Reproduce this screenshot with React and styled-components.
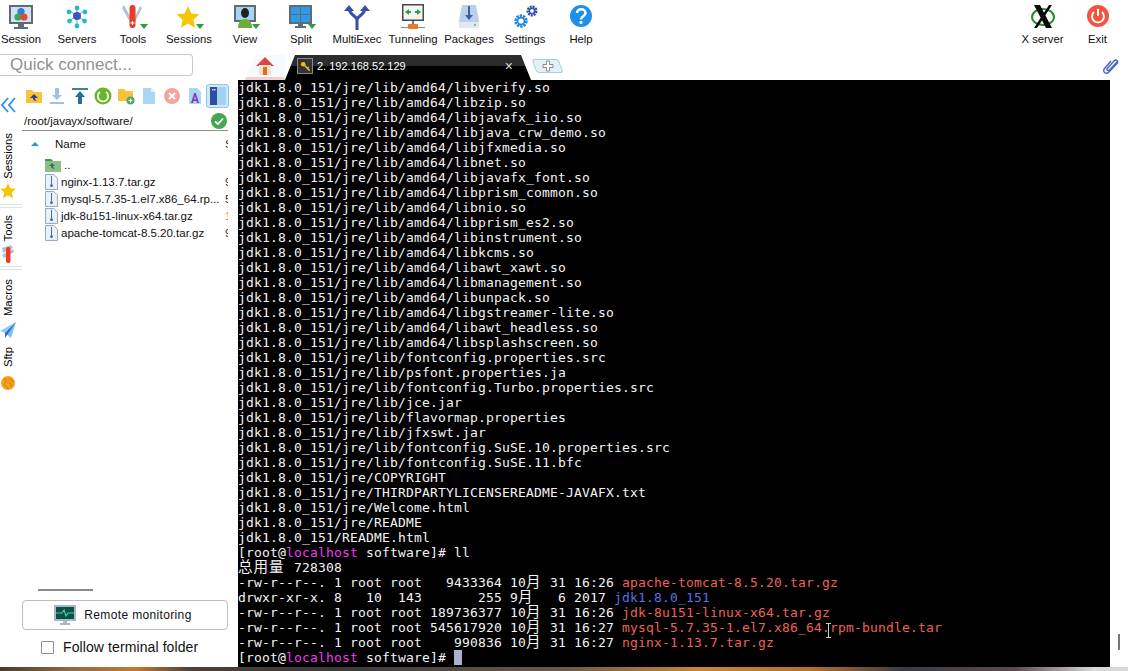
import React from "react";
import styled, { createGlobalStyle } from "styled-components";

const GlobalStyle = createGlobalStyle`
  html, body {
    margin: 0;
    background: #fff;
  }
`;

const Page = styled.div`
  display: flex;
  flex-direction: column;
  width: 1128px;
  height: 671px;
  overflow: hidden;
  background: #fff;
  color: #111;
  font-family: "Liberation Sans", Arial, sans-serif;
`;

const Toolbar = styled.div`
  display: flex;
  justify-content: space-between;
  flex: 0 0 52px;
  margin-left: -7px;
  padding-right: 3px;
`;

const ToolGroup = styled.div`
  display: flex;
`;

const ToolButton = styled.div`
  display: flex;
  flex-direction: column;
  align-items: center;
  width: ${(p) => p.$width || 56}px;
  padding-top: 2px;
  font-size: 11.3px;
  white-space: nowrap;

  svg {
    display: block;
    height: 30px;
    margin-bottom: 1px;
  }
`;

const Body = styled.div`
  display: flex;
  flex: 1;
  min-height: 0;
`;

const LeftColumn = styled.div`
  display: flex;
  flex-direction: column;
  flex: 0 0 238px;
`;

const QuickConnect = styled.div`
  flex: 0 0 20px;
  width: 182px;
  margin-top: 2px;
  padding-left: 10px;
  border: 1px solid #c9c9c9;
  border-left: none;
  border-radius: 0 4px 4px 0;
  color: #929292;
  font-size: 17px;
  line-height: 20px;
`;

const SideArea = styled.div`
  display: flex;
  flex: 1;
  min-height: 0;
`;

const Rail = styled.div`
  display: flex;
  flex-direction: column;
  align-items: center;
  flex: 0 0 22px;
  width: 22px;
  padding: 21px 6px 0 0;
  box-sizing: border-box;

  svg {
    display: block;
    flex: none;
  }
`;

const RailLabel = styled.div`
  margin-top: ${(p) => p.$top}px;
  margin-bottom: ${(p) => p.$bottom}px;
  writing-mode: vertical-rl;
  transform: rotate(180deg);
  font-size: 11.3px;
  line-height: 14px;
  color: #000;
`;

const RailDivider = styled.div`
  flex: none;
  width: 22px;
  margin: ${(p) => p.$top}px -6px 0 0;
  height: 2px;
  border-top: 1px solid #d3e6ee;
  border-bottom: 1px solid #d3e6ee;
`;

const Panel = styled.div`
  display: flex;
  flex-direction: column;
  flex: 0 0 206px;
  width: 206px;
  padding-bottom: 13px;
  box-sizing: border-box;
`;

const PanelTools = styled.div`
  display: flex;
  flex: 0 0 24px;
  margin-top: 8px;
`;

const PanelTool = styled.div`
  display: flex;
  align-items: center;
  justify-content: center;
  flex: 0 0 23px;
  width: 23px;
  height: 24px;
  box-sizing: border-box;
  border-radius: 3px;
  border: 1px solid ${(p) => (p.$active ? "#8cc6ea" : "transparent")};
  background: ${(p) => (p.$active ? "#cfe7f7" : "transparent")};
`;

const PathRow = styled.div`
  display: flex;
  align-items: center;
  justify-content: space-between;
  flex: 0 0 18px;
  margin-top: 4px;
  padding: 0 1px 0 2px;
  border-bottom: 1px solid #8f8f8f;
  font-size: 11.5px;
`;

const HeaderRow = styled.div`
  display: flex;
  align-items: center;
  flex: 0 0 25px;
  padding-left: 9px;
  font-size: 11.5px;
  overflow: hidden;
`;

const SortArrow = styled.span`
  width: 0;
  height: 0;
  margin-right: 16px;
  border-left: 4px solid transparent;
  border-right: 4px solid transparent;
  border-bottom: 4px solid #2f8fe6;
`;

const HeaderName = styled.span`
  flex: 1;
`;

const FileRow = styled.div`
  display: flex;
  align-items: center;
  height: 17px;
  padding-left: 23px;
  font-size: 11.5px;
  white-space: nowrap;

  svg {
    flex: none;
    margin-right: 3px;
  }
`;

const FileName = styled.span`
  flex: 1;
  min-width: 0;
`;

const FileSize = styled.span`
  flex: 0 0 3px;
  width: 3px;
  overflow: hidden;
  color: ${(p) => p.$tint || "#333"};
`;

const PanelFooter = styled.div`
  display: flex;
  flex-direction: column;
  margin-top: auto;
`;

const ShortRule = styled.div`
  width: 55px;
  height: 2px;
  margin-left: 16px;
  background: #8a8a8a;
`;

const MonitorButton = styled.div`
  display: flex;
  align-items: center;
  justify-content: center;
  gap: 8px;
  height: 28px;
  margin-top: 9px;
  padding-right: 4px;
  border: 1px solid #bdbdbd;
  border-radius: 4px;
  font-size: 12px;
  letter-spacing: 0.35px;
`;

const FollowRow = styled.label`
  display: flex;
  align-items: center;
  gap: 9px;
  height: 14px;
  margin-top: 10px;
  padding-left: 19px;
  font-size: 14px;
  letter-spacing: 0.1px;
`;

const CheckBox = styled.span`
  flex: none;
  width: 11px;
  height: 11px;
  border: 1px solid #8e8e8e;
  border-radius: 1px;
`;

const Workspace = styled.div`
  display: flex;
  flex-direction: column;
  flex: 1;
  min-width: 0;
`;

const TabBar = styled.div`
  display: flex;
  align-items: flex-end;
  flex: 0 0 28px;
  padding-left: 7px;
`;

const HomeTab = styled.div`
  display: flex;
  align-items: center;
  justify-content: center;
  width: 40px;
  height: 25px;
  box-sizing: border-box;
  border-bottom: 3px solid #f0d0d0;
  clip-path: polygon(10px 0, 100% 0, 100% 100%, 0 100%);
  background: #f6fafc;
`;

const ActiveTab = styled.div`
  display: flex;
  align-items: center;
  width: 246px;
  height: 25px;
  padding: 0 18px 3px 12px;
  box-sizing: border-box;
  clip-path: polygon(10px 0, calc(100% - 10px) 0, 100% 100%, 0 100%);
  background: linear-gradient(#2c2c2c 0, #2c2c2c 44%, #000 44%);
  color: #fff;
  font-size: 11px;
`;

const KeyBox = styled.span`
  display: flex;
  align-items: center;
  justify-content: center;
  width: 14px;
  height: 14px;
  margin-right: 4px;
  border: 1px solid #888;
  background: #333;
`;

const TabTitle = styled.span`
  flex: 1;
`;

const TabClose = styled.span`
  color: #ddd;
  font-size: 14px;
`;

const NewTab = styled.div`
  display: flex;
  align-items: center;
  justify-content: center;
  width: 27px;
  height: 14px;
  margin: 0 0 7px 3px;
  border: 1px solid #a6d0e2;
  border-radius: 3px;
  background: #e4f2f8;
  transform: skewX(20deg);
  box-sizing: border-box;

  svg {
    transform: skewX(-20deg);
  }
`;

const ClipSlot = styled.div`
  margin: 0 8px 5px auto;

  svg {
    display: block;
  }
`;

const TermArea = styled.div`
  display: flex;
  flex: 1;
  min-height: 0;
`;

const Terminal = styled.pre`
  position: relative;
  flex: 1;
  margin: 0;
  padding: 0;
  overflow: hidden;
  background: #000;
  color: #f4f4f4;
  font-family: "DejaVu Sans Mono", "Noto Sans CJK SC", monospace;
  font-size: 13px;
  letter-spacing: 0.174px;
  line-height: 15px;
`;

const TermLine = styled.div`
  height: 15px;
  white-space: pre;
`;

const Wide = styled.span`
  display: inline-block;
  width: ${(p) => p.$cells * 8}px;
  font-size: 14.5px;
  letter-spacing: 1px;
  line-height: 15px;
  vertical-align: top;
`;

const Host = styled.span`
  color: #f03cf0;
`;

const Archive = styled.span`
  color: #ee6358;
`;

const Directory = styled.span`
  color: #5d6fe6;
`;

const Cursor = styled.span`
  display: inline-block;
  width: 8px;
  height: 15px;
  vertical-align: top;
  background: #a9b2cf;
`;

const IBeam = styled.span`
  position: absolute;
  left: 588px;
  top: 543px;
  width: 5px;
  height: 13px;
  border-top: 1px solid #ccc;
  border-bottom: 1px solid #ccc;

  &::after {
    content: "";
    position: absolute;
    left: 2px;
    top: 0;
    bottom: 0;
    width: 1px;
    background: #ccc;
  }
`;

const Gutter = styled.div`
  display: flex;
  align-items: flex-end;
  justify-content: center;
  flex: 0 0 18px;
  padding-bottom: 17px;
  box-sizing: border-box;
`;

const GutterThumb = styled.div`
  width: 2px;
  height: 16px;
  background: #777;
`;

const DesktopStrip = styled.div`
  flex: 0 0 4px;
  background: linear-gradient(
    90deg,
    #4a3a2c 0,
    #8a6a45 6%,
    #c07a30 12%,
    #4c4038 17%,
    #3a3a3a 30%,
    #6a5a4a 50%,
    #c9862f 62%,
    #b86f28 72%,
    #3a3a42 80%,
    #5a4a50 90%,
    #d9d9d9 97%
  );
`;

const Drop = () => <path d="M23 22h8l-4 5z" fill="#2e9e3c" />;

const SessionIcon = () => (
  <svg viewBox="0 0 32 30" width="32">
    <rect x="4" y="3" width="24" height="19" fill="#5f6b78" />
    <rect x="6" y="5" width="20" height="15" fill="#cfe2f3" />
    <circle cx="16" cy="9.5" r="3.6" fill="#2a7de1" />
    <circle cx="13" cy="15" r="3.6" fill="#3aa655" />
    <circle cx="19" cy="15" r="3.6" fill="#e2483d" />
    <path d="M13 22h6v3h4v2H9v-2h4z" fill="#5f6b78" />
  </svg>
);

const ServersIcon = () => (
  <svg viewBox="0 0 32 30" width="32">
    <path d="M16 14 9 9M16 14l7-5M16 14l-8 5M16 14l8 5M16 14V6M16 14v9" stroke="#4aa8c8" strokeWidth="1" />
    <circle cx="16" cy="14" r="4" fill="#3a56c5" />
    <circle cx="16" cy="6" r="2.4" fill="#2fb7c7" />
    <circle cx="8" cy="10" r="2.4" fill="#2fb7c7" />
    <circle cx="24" cy="10" r="2.4" fill="#2fb7c7" />
    <circle cx="8.5" cy="19" r="2.4" fill="#2fb7c7" />
    <circle cx="23.5" cy="19" r="2.4" fill="#2fb7c7" />
    <circle cx="16" cy="24" r="2.4" fill="#2fb7c7" />
  </svg>
);

const ToolsIcon = () => (
  <svg viewBox="0 0 32 30" width="32">
    <path d="M7 3l8 15-2 2L5 6z" fill="#b6bfd6" />
    <path d="M25 6l-7 14-2-1 7-15z" fill="#b6bfd6" />
    <rect x="12.5" y="3" width="6" height="23" rx="3" fill="#ec3b24" />
    <path d="M15.5 19v4M13.5 21h4" stroke="#fff" strokeWidth="1.2" />
    <Drop />
  </svg>
);

const StarIcon = () => (
  <svg viewBox="0 0 32 30" width="32">
    <path d="M15 4l3.4 7.4 8 .9-6 5.4 1.7 8-7.1-4.1-7.1 4.1 1.7-8-6-5.4 8-.9z" fill="#f6c409" />
    <Drop />
  </svg>
);

const ViewIcon = () => (
  <svg viewBox="0 0 32 30" width="32">
    <rect x="5" y="3" width="22" height="17" fill="#5f6b78" />
    <rect x="7" y="5" width="18" height="13" fill="#a8d4ee" />
    <ellipse cx="16" cy="11" rx="4" ry="5" fill="#222" />
    <path d="M9 26c0-6 3-9 7-9s7 3 7 9z" fill="#6cae3a" />
    <Drop />
  </svg>
);

const SplitIcon = () => (
  <svg viewBox="0 0 32 30" width="32">
    <rect x="4" y="3" width="23" height="19" fill="#5f6b78" />
    <rect x="6" y="5" width="9" height="7" fill="#2f9be6" />
    <rect x="16" y="5" width="9" height="7" fill="#2f9be6" />
    <rect x="6" y="13" width="9" height="7" fill="#2f9be6" />
    <rect x="16" y="13" width="9" height="7" fill="#2f9be6" />
    <path d="M13 22h5v2h3v2H10v-2h3z" fill="#5f6b78" />
    <Drop />
  </svg>
);

const MultiExecIcon = () => (
  <svg viewBox="0 0 32 30" width="32">
    <path d="M16 28V18C16 14 8 13 8 6M16 18c0-4 8-5 8-12" fill="none" stroke="#3550a8" strokeWidth="3" />
    <path d="M3 9l5-6 5 6zM19 9l5-6 5 6z" fill="#3550a8" />
  </svg>
);

const TunnelIcon = () => (
  <svg viewBox="0 0 32 30" width="32">
    <rect x="5" y="2" width="22" height="17" fill="#4a4a4a" />
    <rect x="6.5" y="3.5" width="19" height="14" fill="#f4f4f4" />
    <path d="M8 10l4-3v2h2v2h-2v2zM24 10l-4-3v2h-2v2h2v2z" fill="#25a244" />
    <rect x="15" y="19" width="2" height="4" fill="#777" />
    <rect x="4" y="25" width="24" height="1" fill="#8a8a8a" />
    <rect x="11" y="22" width="10" height="5" rx="1" fill="#ec7a23" />
  </svg>
);

const PackagesIcon = () => (
  <svg viewBox="0 0 32 30" width="32">
    <path d="M9 3h14l3 16v7H6v-7z" fill="#bcd0e6" />
    <rect x="6" y="20" width="20" height="6" fill="#dfe9f4" />
    <circle cx="22" cy="23" r="1" fill="#4cb050" />
    <path d="M15 4h2v9h3l-4 5-4-5h3z" fill="#3b5fa8" />
  </svg>
);

const SettingsIcon = () => (
  <svg viewBox="0 0 32 30" width="32">
    <circle cx="12" cy="19" r="5" fill="none" stroke="#1f86e0" strokeWidth="3.4" strokeDasharray="2.2 0.9" />
    <circle cx="12" cy="19" r="3.4" fill="none" stroke="#1f86e0" strokeWidth="1.6" />
    <circle cx="23" cy="9" r="4" fill="none" stroke="#2e4fae" strokeWidth="3" strokeDasharray="1.9 0.8" />
    <circle cx="23" cy="9" r="2.6" fill="none" stroke="#2e4fae" strokeWidth="1.4" />
  </svg>
);

const HelpIcon = () => (
  <svg viewBox="0 0 32 30" width="32">
    <circle cx="16" cy="14" r="11" fill="#1e90ea" />
    <path d="M12 11c0-5 8.500-5 8.500 0 0 3.500-4.500 3-4.500 6.500" fill="none" stroke="#fff" strokeWidth="2.6" />
    <rect x="14.600" y="19" width="2.800" height="2.800" fill="#fff" />
  </svg>
);

const XServerIcon = () => (
  <svg viewBox="0 0 32 30" width="32">
    <ellipse cx="16" cy="15" rx="11" ry="8" fill="none" stroke="#1f9128" strokeWidth="2" />
    <path d="M7 3h6l12 23h-6zM22 3h3L10 26H7z" fill="#0b0b0b" />
  </svg>
);

const ExitIcon = () => (
  <svg viewBox="0 0 32 30" width="32">
    <circle cx="16" cy="14" r="11" fill="#f4533f" />
    <path d="M12 10a6 6 0 1 0 8 0" fill="none" stroke="#fff" strokeWidth="2" />
    <path d="M16 7v7" stroke="#fff" strokeWidth="2" />
  </svg>
);

const HomeIcon = () => (
  <svg viewBox="0 0 20 20" width="20" height="20">
    <path d="M10 1 1 10h3v9h12v-9h3z" fill="#d9473f" />
    <rect x="4" y="9" width="12" height="10" fill="#efe3d0" />
    <rect x="8" y="11" width="4" height="8" fill="#e8691e" />
  </svg>
);

const KeyIcon = () => (
  <svg viewBox="0 0 12 12" width="11" height="11">
    <circle cx="3.500" cy="3.500" r="2.500" fill="#f2b81c" />
    <path d="M5 5l5.500 5.500M8 8l1.500-1.500" stroke="#f2b81c" strokeWidth="1.600" />
  </svg>
);

const PlusIcon = () => (
  <svg viewBox="0 0 12 12" width="12" height="12">
    <path d="M4.500 1h3v3.500H11v3H7.500V11h-3V7.500H1v-3h3.500z" fill="#fff" stroke="#8a8a8a" />
  </svg>
);

const ClipIcon = () => (
  <svg viewBox="0 0 18 18" width="18" height="18">
    <path
      d="M15 5 7.500 13c-1.500 1.600-3.500 0-2.200-1.600L12 4c2-2.200 5 .2 3 2.500l-8 8.500c-3 3-7-.5-4.500-3.500L9 4"
      fill="none"
      stroke="#4a68c0"
      strokeWidth="1.500"
    />
  </svg>
);

const ChevronsIcon = () => (
  <svg viewBox="0 0 15 16" width="15" height="16">
    <path d="M7 1 1 8l6 7M14 1 8 8l6 7" fill="none" stroke="#2f8fe6" strokeWidth="1.800" />
  </svg>
);

const RailStar = () => (
  <svg viewBox="0 0 16 16" width="16" height="16">
    <path d="M8 0l2.300 5.200 5.700.6-4.300 3.800 1.300 5.600L8 12.300 3 15.200l1.300-5.600L0 5.800l5.700-.6z" fill="#f6c409" />
  </svg>
);

const RailKnife = () => (
  <svg viewBox="0 0 16 20" width="16" height="20">
    <path d="M2 4l9-3 2 3-10 5zM2 11l11-6 1 3-10 6z" fill="#b6bfd6" />
    <rect x="6" y="3" width="4.500" height="16" rx="2" fill="#ec3b24" />
  </svg>
);

const RailPlane = () => (
  <svg viewBox="0 0 16 17" width="16" height="17">
    <path d="M16 0 0 9l5 2z" fill="#8ccbf5" />
    <path d="M16 0 5 11l6 5z" fill="#7cc0f0" />
    <path d="M16 0 5 11l0 5 2-3z" fill="#2d66b8" />
  </svg>
);

const RailGlobe = () => (
  <svg viewBox="0 0 14 14" width="14" height="14">
    <circle cx="7" cy="7" r="7" fill="#f4a01c" />
    <path d="M3 3c3 0 3 3 1 4s1 4 3 5M9 2c-1 2 3 3 4 4M8 7c2 0 3 2 2 4" fill="none" stroke="#d9701a" strokeWidth="1" />
  </svg>
);

const FolderUp = ({ body = "#f8c23a", arrow = "#2c3e9c" }) => (
  <svg viewBox="0 0 18 18" width="18" height="18">
    <path d="M1 3h6l2 2h8v11H1z" fill={body} />
    <path d="M9 7 5 11h3c0 2 1 3 4 3-1.500-1-2-2-2-3h3z" fill={arrow} />
  </svg>
);

const DownloadTool = () => (
  <svg viewBox="0 0 18 18" width="18" height="18">
    <path d="M7 1h4v7h3l-5 5-5-5h3z" fill="#9cc0e6" />
    <rect x="2" y="15" width="14" height="2" fill="#9cc0e6" />
  </svg>
);

const UploadTool = () => (
  <svg viewBox="0 0 18 18" width="18" height="18">
    <rect x="1" y="1" width="16" height="2" fill="#2f8c96" />
    <path d="M9 4l5 6h-3v7H7v-7H4z" fill="#24718f" />
  </svg>
);

const RefreshTool = () => (
  <svg viewBox="0 0 18 18" width="18" height="18">
    <circle cx="9" cy="9" r="8.500" fill="#6cb42c" />
    <path d="M6 5a5.200 5.200 0 1 0 6 0" fill="none" stroke="#fff" strokeWidth="1.600" />
  </svg>
);

const NewFolderTool = () => (
  <svg viewBox="0 0 18 18" width="18" height="18">
    <path d="M1 2h6l2 2h7v10H1z" fill="#f8c23a" />
    <circle cx="13.500" cy="13.500" r="4" fill="#4ea866" />
    <path d="M13.500 11.500v4M11.500 13.500h4" stroke="#fff" strokeWidth="1.200" />
  </svg>
);

const NewFileTool = () => (
  <svg viewBox="0 0 18 18" width="18" height="18">
    <path d="M3 1h8l4 4v12H3z" fill="#a9d6f5" />
    <path d="M11 1v4h4z" fill="#dff0fb" />
  </svg>
);

const DeleteTool = () => (
  <svg viewBox="0 0 18 18" width="18" height="18">
    <circle cx="9" cy="9" r="8" fill="#f2a59a" />
    <path d="M6 6l6 6M12 6l-6 6" stroke="#fff" strokeWidth="2" />
  </svg>
);

const RenameTool = () => (
  <svg viewBox="0 0 18 18" width="18" height="18">
    <path d="M3 1h8l4 4v12H3z" fill="#a9d6f5" />
    <path d="M5 16 8.200 6h1.600L13 16h-2l-.6-2H7.600L7 16zM8 12.500h2L9 9z" fill="#8b3bb0" />
  </svg>
);

const PanelToggleTool = () => (
  <svg viewBox="0 0 18 20" width="18" height="20">
    <rect x="1" y="1" width="7" height="18" fill="#2a4ea0" />
    <rect x="8" y="1" width="9" height="18" fill="#a4d2f2" />
    <rect x="3" y="3" width="1.500" height="1.500" fill="#cfe0f5" />
    <rect x="5" y="3" width="1.500" height="1.500" fill="#cfe0f5" />
  </svg>
);

const CheckOk = () => (
  <svg viewBox="0 0 16 16" width="16" height="16">
    <circle cx="8" cy="8" r="8" fill="#45a550" />
    <path d="M4 8.500 7 11l5-5.500" fill="none" stroke="#fff" strokeWidth="1.800" />
  </svg>
);

const UpFolderIcon = () => (
  <svg viewBox="0 0 16 16" width="16" height="16">
    <path d="M0 2h6l2 2h8v11H0z" fill="#8cc08a" />
    <path d="M0 2h6l2 2H0z" fill="#3f9a4a" />
    <path d="M7 6 4 9h2c0 2 1 3 4 3-1-.7-2-1.500-2-3h2z" fill="#3a6a5a" />
  </svg>
);

const ArchiveIcon = () => (
  <svg viewBox="0 0 14 17" width="13" height="16">
    <path d="M.5.500h9l4 4v12H.5z" fill="#e8f2fa" stroke="#8aa0b8" />
    <path d="M7 2v9" stroke="#3c62b0" strokeWidth="1" />
    <circle cx="7" cy="12.500" r="1.500" fill="#3c62b0" />
  </svg>
);

const ActivityIcon = () => (
  <svg viewBox="0 0 22 21" width="22" height="21">
    <rect x="0" y="0" width="22" height="16" fill="#a9b7c6" />
    <rect x="2" y="2" width="18" height="12" fill="#0e4f47" />
    <path d="M2 8h6l2-3 2 6 2-3h6" fill="none" stroke="#35d6a8" strokeWidth="1.200" />
    <path d="M9 16h4v2h3v2H6v-2h3z" fill="#a9b7c6" />
  </svg>
);

const leftTools = [
  ["Session", SessionIcon],
  ["Servers", ServersIcon],
  ["Tools", ToolsIcon],
  ["Sessions", StarIcon],
  ["View", ViewIcon],
  ["Split", SplitIcon],
  ["MultiExec", MultiExecIcon],
  ["Tunneling", TunnelIcon],
  ["Packages", PackagesIcon],
  ["Settings", SettingsIcon],
  ["Help", HelpIcon],
];

const panelTools = [
  <FolderUp key="up" />,
  <DownloadTool key="down" />,
  <UploadTool key="upload" />,
  <RefreshTool key="refresh" />,
  <NewFolderTool key="folder" />,
  <NewFileTool key="file" />,
  <DeleteTool key="delete" />,
  <RenameTool key="rename" />,
];

const files = [
  ["nginx-1.13.7.tar.gz", "9"],
  ["mysql-5.7.35-1.el7.x86_64.rp...", "5"],
  ["jdk-8u151-linux-x64.tar.gz", "1", "#d08a20"],
  ["apache-tomcat-8.5.20.tar.gz", "9"],
];

const jre = "jdk1.8.0_151/jre/";
const amd = jre + "lib/amd64/";
const output = [
  ...[
    "libverify.so",
    "libzip.so",
    "libjavafx_iio.so",
    "libjava_crw_demo.so",
    "libjfxmedia.so",
    "libnet.so",
    "libjavafx_font.so",
    "libprism_common.so",
    "libnio.so",
    "libprism_es2.so",
    "libinstrument.so",
    "libkcms.so",
    "libawt_xawt.so",
    "libmanagement.so",
    "libunpack.so",
    "libgstreamer-lite.so",
    "libawt_headless.so",
    "libsplashscreen.so",
  ].map((name) => amd + name),
  ...[
    "fontconfig.properties.src",
    "psfont.properties.ja",
    "fontconfig.Turbo.properties.src",
    "jce.jar",
    "flavormap.properties",
    "jfxswt.jar",
    "fontconfig.SuSE.10.properties.src",
    "fontconfig.SuSE.11.bfc",
  ].map((name) => jre + "lib/" + name),
  jre + "COPYRIGHT",
  jre + "THIRDPARTYLICENSEREADME-JAVAFX.txt",
  jre + "Welcome.html",
  jre + "README",
  "jdk1.8.0_151/README.html",
];

const listing = [
  ["-rw-r--r--. 1 root root   9433364 ", "10", " 31 16:26 ", "apache-tomcat-8.5.20.tar.gz"],
  ["drwxr-xr-x. 8   10  143       255 ", "9", "   6 2017 ", "jdk1.8.0_151", true],
  ["-rw-r--r--. 1 root root 189736377 ", "10", " 31 16:26 ", "jdk-8u151-linux-x64.tar.gz"],
  ["-rw-r--r--. 1 root root 545617920 ", "10", " 31 16:27 ", "mysql-5.7.35-1.el7.x86_64.rpm-bundle.tar"],
  ["-rw-r--r--. 1 root root    990836 ", "10", " 31 16:27 ", "nginx-1.13.7.tar.gz"],
];

const Prompt = () => (
  <>
    [root@<Host>localhost</Host> software]#{" "}
  </>
);

export default function App() {
  return (
    <Page>
      <GlobalStyle />
      <Toolbar>
        <ToolGroup>
          {leftTools.map(([label, Icon]) => (
            <ToolButton key={label}>
              <Icon />
              {label}
            </ToolButton>
          ))}
        </ToolGroup>
        <ToolGroup>
          <ToolButton $width={55}>
            <XServerIcon />X server
          </ToolButton>
          <ToolButton $width={55}>
            <ExitIcon />
            Exit
          </ToolButton>
        </ToolGroup>
      </Toolbar>
      <Body>
        <LeftColumn>
          <QuickConnect>Quick connect...</QuickConnect>
          <SideArea>
            <Rail>
              <ChevronsIcon />
              <RailLabel $top={20} $bottom={4}>Sessions</RailLabel>
              <RailStar />
              <RailDivider $top={5} />
              <RailLabel $top={7} $bottom={3}>Tools</RailLabel>
              <RailKnife />
              <RailDivider $top={2} />
              <RailLabel $top={9} $bottom={6}>Macros</RailLabel>
              <RailPlane />
              <RailLabel $top={8} $bottom={9}>Sftp</RailLabel>
              <RailGlobe />
            </Rail>
            <Panel>
              <PanelTools>
                {panelTools.map((tool) => (
                  <PanelTool key={tool.key}>{tool}</PanelTool>
                ))}
                <PanelTool $active>
                  <PanelToggleTool />
                </PanelTool>
              </PanelTools>
              <PathRow>
                /root/javayx/software/
                <CheckOk />
              </PathRow>
              <HeaderRow>
                <SortArrow />
                <HeaderName>Name</HeaderName>
                <FileSize>S</FileSize>
              </HeaderRow>
              <FileRow>
                <UpFolderIcon />
                <FileName>..</FileName>
              </FileRow>
              {files.map(([name, size, tint]) => (
                <FileRow key={name}>
                  <ArchiveIcon />
                  <FileName>{name}</FileName>
                  <FileSize $tint={tint}>{size}</FileSize>
                </FileRow>
              ))}
              <PanelFooter>
                <ShortRule />
                <MonitorButton>
                  <ActivityIcon />
                  Remote monitoring
                </MonitorButton>
                <FollowRow>
                  <CheckBox />
                  Follow terminal folder
                </FollowRow>
              </PanelFooter>
            </Panel>
          </SideArea>
        </LeftColumn>
        <Workspace>
          <TabBar>
            <HomeTab>
              <HomeIcon />
            </HomeTab>
            <ActiveTab>
              <KeyBox>
                <KeyIcon />
              </KeyBox>
              <TabTitle>2. 192.168.52.129</TabTitle>
              <TabClose>×</TabClose>
            </ActiveTab>
            <NewTab>
              <PlusIcon />
            </NewTab>
            <ClipSlot>
              <ClipIcon />
            </ClipSlot>
          </TabBar>
          <TermArea>
            <Terminal>
              {output.map((line) => (
                <TermLine key={line}>{line}</TermLine>
              ))}
              <TermLine>
                <Prompt />
                ll
              </TermLine>
              <TermLine>
                <Wide $cells={6}>总用量</Wide> 728308
              </TermLine>
              {listing.map(([head, month, tail, name, isDir]) => (
                <TermLine key={name}>
                  {head}
                  {month}
                  <Wide $cells={2}>月</Wide>
                  {tail}
                  {isDir ? <Directory>{name}</Directory> : <Archive>{name}</Archive>}
                </TermLine>
              ))}
              <TermLine>
                <Prompt />
                <Cursor />
              </TermLine>
              <IBeam />
            </Terminal>
            <Gutter>
              <GutterThumb />
            </Gutter>
          </TermArea>
        </Workspace>
      </Body>
      <DesktopStrip />
    </Page>
  );
}
